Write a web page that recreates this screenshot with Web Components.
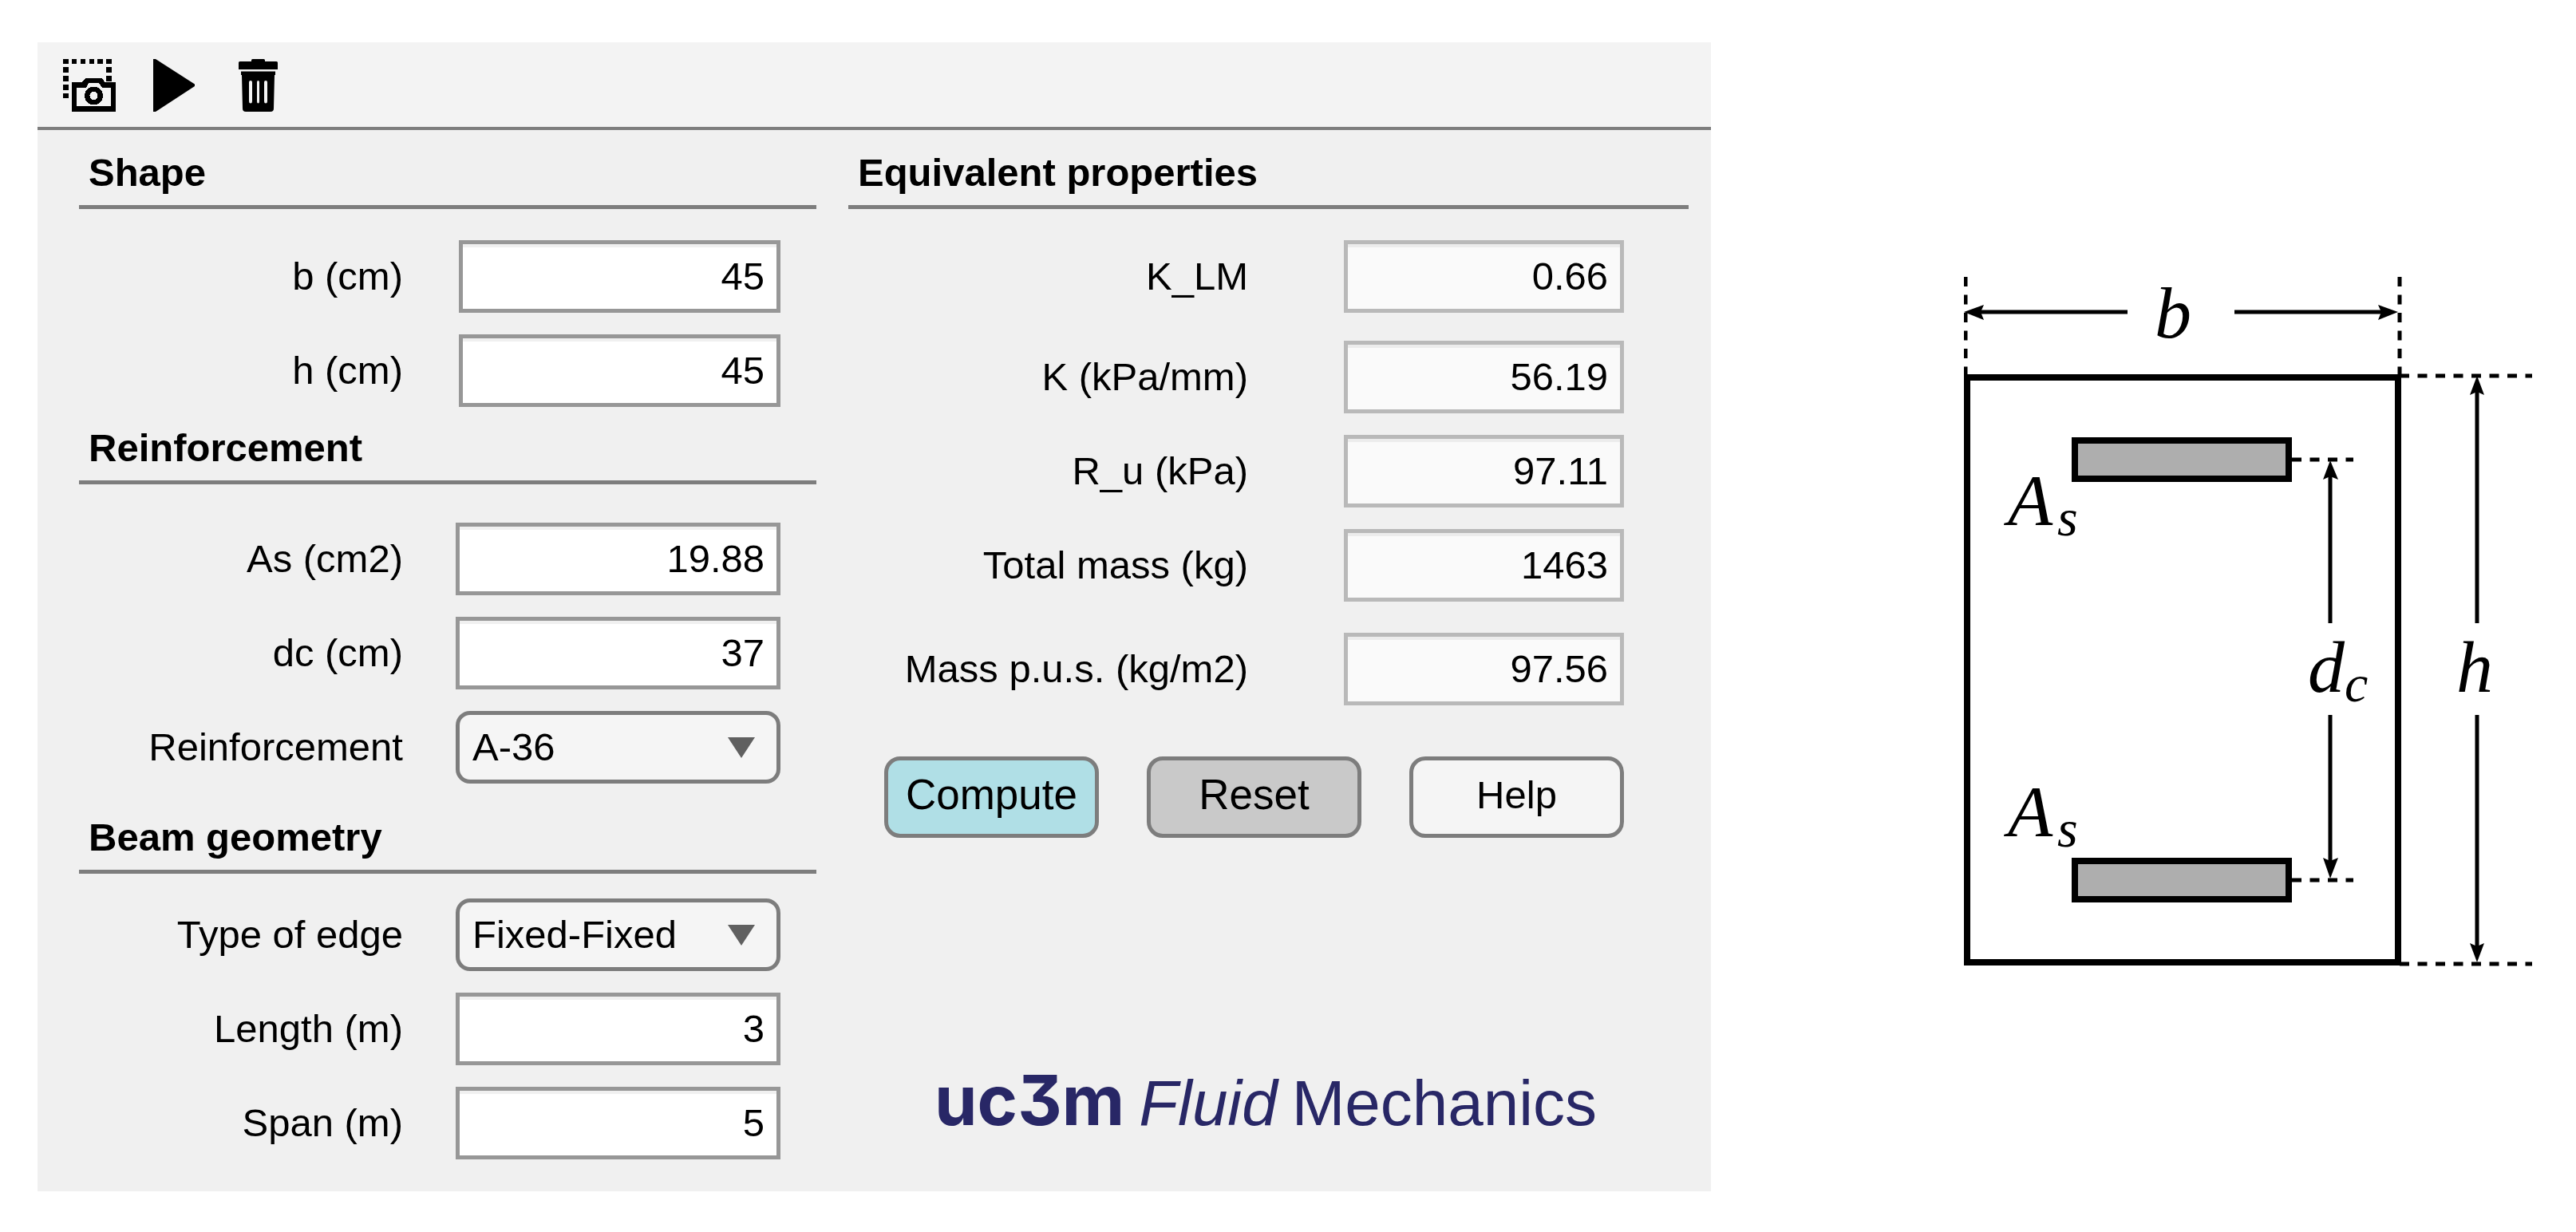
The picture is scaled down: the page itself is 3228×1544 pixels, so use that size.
<!DOCTYPE html>
<html lang="en">
<head>
<meta charset="utf-8">
<title>uc3m Fluid Mechanics - Equivalent properties</title>
<style>
  body {
    margin: 0;
    background: #fff;
    color: #000;
    font-family: "Liberation Sans", Arial, sans-serif;
    font-size: 49px;
    line-height: 56px;
  }
</style>
</head>
<body>
<beam-app></beam-app>

<template id="beam-app">
  <style>
    :host { display: flex; align-items: center; gap: 317px; padding: 53px 55px 51px 47px; }
    main { flex: 1; min-width: 0; background: #f0f0f0; }
    .columns { display: grid; grid-template-columns: 924fr 1053fr; gap: 40px; padding: 25px 28px 40px 52px; }
    .column { display: flex; flex-direction: column; min-width: 0; }
    .shape { --fields-top: 39px; --field-width: 403px; --label-gap: 70px; }
    .steel { --fields-top: 48px; margin-top: 23px; }
    .beam { --fields-top: 31px; margin-top: 39px; }
    .results { --fields-top: 39px; --field-width: 351px; --label-gap: 120px; --fields-right: 81px; }
    .first { margin-bottom: 8px; }
    .last { margin-top: 12px; }
    .actions { display: flex; gap: 60px; padding: 64px 81px 0 45px; }
    .actions push-button { flex: 1; }
    brand-logo { margin: auto 0 25px 108px; }
    section-diagram { flex: 0 0 712px; }
  </style>
  <main>
    <tool-bar></tool-bar>
    <div class="columns">
      <div class="column">
        <form-section class="shape" heading="Shape">
          <edit-field label="b (cm)" value="45"></edit-field>
          <edit-field label="h (cm)" value="45"></edit-field>
        </form-section>
        <form-section class="steel" heading="Reinforcement">
          <edit-field label="As (cm2)" value="19.88"></edit-field>
          <edit-field label="dc (cm)" value="37"></edit-field>
          <choice-field label="Reinforcement" value="A-36"></choice-field>
        </form-section>
        <form-section class="beam" heading="Beam geometry">
          <choice-field label="Type of edge" value="Fixed-Fixed"></choice-field>
          <edit-field label="Length (m)" value="3"></edit-field>
          <edit-field label="Span (m)" value="5"></edit-field>
        </form-section>
      </div>
      <div class="column">
        <form-section class="results" heading="Equivalent properties">
          <edit-field class="first" label="K_LM" value="0.66" readonly></edit-field>
          <edit-field label="K (kPa/mm)" value="56.19" readonly></edit-field>
          <edit-field label="R_u (kPa)" value="97.11" readonly></edit-field>
          <edit-field label="Total mass (kg)" value="1463" readonly></edit-field>
          <edit-field class="last" label="Mass p.u.s. (kg/m2)" value="97.56" readonly></edit-field>
        </form-section>
        <div class="actions">
          <push-button kind="primary">Compute</push-button>
          <push-button kind="secondary">Reset</push-button>
          <push-button>Help</push-button>
        </div>
        <brand-logo></brand-logo>
      </div>
    </div>
  </main>
  <section-diagram></section-diagram>
</template>

<template id="tool-bar">
  <style>
    :host { display: flex; gap: 40px; padding: 21px 32px 19px; background: #f3f3f3; border-bottom: 4px solid #7d7d7d; }
    button { display: block; width: 66px; height: 66px; padding: 0; border: 0; background: none; color: #000; }
    svg { display: block; width: 66px; height: 66px; fill: currentColor; }
  </style>
  <button type="button" aria-label="Capture">
    <svg viewBox="0 0 66 66" shape-rendering="crispEdges">
      <path d="M0 0h7v6H0zM11 0h6v6h-6zM22 0h6v6h-6zM33 0h6v6h-6zM43 0h7v6h-7zM54 0h7v6h-7zM0 10h7v7H0zM0 21h7v7H0zM0 32h7v7H0zM0 43h7v6H0zM54 10h7v7h-7zM54 21h7v7h-7z"/>
      <path fill-rule="evenodd" d="M11 29H24L25 27L28 24H49L51 27L52 29H66V66H11ZM17 36V59H60V36H49L45 30H32L29 36Z"/>
      <path fill-rule="evenodd" d="M38.500 34.500a11.500 11.500 0 1 0 .1 0zM38.500 41a5 5 0 1 1-.1 0z"/>
    </svg>
  </button>
  <button type="button" aria-label="Run">
    <svg viewBox="0 0 66 66"><path d="M7 0H10L59 31.500V34L10 66H7Z"/></svg>
  </button>
  <button type="button" aria-label="Delete">
    <svg viewBox="0 0 66 66">
      <path d="M24 1.500Q24 0 25.500 0H39.500Q41 0 41 1.500V3H55.500Q57 3 57 4.500V13H8V4.500Q8 3 9.500 3H24Z"/>
      <path fill-rule="evenodd" d="M11 15.500H54V20H53L52 62Q52 66 48 66H17Q13 66 13 62L12 20H11ZM21 29V53Q21 55.500 23 55.500T25 53V29Q25 27 23 27T21 29ZM31 29V53Q31 55.500 32.500 55.500T34 53V29Q34 27 32.500 27T31 29ZM40 29V53Q40 55.500 42 55.500T44 53V29Q44 27 42 27T40 29Z"/>
    </svg>
  </button>
</template>

<template id="form-section">
  <style>
    :host { display: block; }
    h2 { margin: 0; padding: 0 12px 13px; border-bottom: 5px solid #7d7d7d; font-size: 49px; line-height: 56px; font-weight: bold; }
    .fields { display: flex; flex-direction: column; gap: 27px; padding: var(--fields-top) var(--fields-right, 45px) 0 0; }
  </style>
  <h2></h2>
  <div class="fields"><slot></slot></div>
</template>

<template id="edit-field">
  <style>
    :host { display: grid; grid-template-columns: 1fr var(--field-width, 407px); column-gap: var(--label-gap, 66px); align-items: center; }
    label { text-align: right; white-space: nowrap; }
    input { box-sizing: border-box; width: 100%; height: 91px; margin: 0; padding: 0 15px 2px; border: 5px solid #979797; border-radius: 0; outline: 0;
      background: #fff; box-shadow: inset 0 4px #f0f0f0; color: #000; font: inherit; text-align: right; }
    label { padding-bottom: 2px; }
    input:read-only { border-color: #b9b9b9; background: #fafafa; box-shadow: inset 0 4px #ececec; }
  </style>
  <label for="control"></label>
  <input id="control" type="text">
</template>

<template id="choice-field">
  <style>
    :host { display: grid; grid-template-columns: 1fr var(--field-width, 407px); column-gap: var(--label-gap, 66px); align-items: center; }
    label { padding-bottom: 2px; text-align: right; white-space: nowrap; }
    .box { display: grid; align-items: center; }
    .box > * { grid-area: 1 / 1; }
    select { appearance: none; box-sizing: border-box; width: 100%; height: 91px; margin: 0; padding: 0 80px 2px 16px; border: 5px solid #7d7d7d;
      border-radius: 18px; outline: 0; background: #f5f5f5; color: #000; font: inherit; }
    svg { justify-self: end; width: 34px; height: 26px; margin-right: 32px; fill: #606060; pointer-events: none; }
  </style>
  <label for="control"></label>
  <div class="box">
    <select id="control"></select>
    <svg viewBox="0 0 34 26" aria-hidden="true"><path d="M0 0H34L17 26Z"/></svg>
  </div>
</template>

<template id="push-button">
  <style>
    :host { display: block; }
    button { box-sizing: border-box; width: 100%; height: 102px; margin: 0; padding: 0 0 6px; border: 5px solid #7d7d7d; border-radius: 20px;
      background: #f5f5f5; color: #000; font: inherit; }
    :host([kind]) button { font-size: 53px; }
    :host([kind="primary"]) button { background: #b0dfe6; }
    :host([kind="secondary"]) button { background: #c9c9c9; }
  </style>
  <button type="button"><slot></slot></button>
</template>

<template id="brand-logo">
  <style>
    :host { display: flex; align-items: baseline; gap: 18px; color: #282766; font-size: 80px; line-height: 90px; white-space: nowrap; }
    .mark { font-family: Inter, "Liberation Sans", sans-serif; font-size: 86px; font-weight: 700; font-feature-settings: "cv09"; }
  </style>
  <span class="mark">uc3m</span>
  <i>Fluid</i>
  <span>Mechanics</span>
</template>

<template id="section-diagram">
  <style>
    :host { display: block; }
    svg { display: block; width: 100%; }
    .line { fill: none; stroke: #000; stroke-width: 5; }
    .dash { fill: none; stroke: #000; stroke-width: 5; stroke-dasharray: 12 10.5; }
    .outline { fill: none; stroke: #000; stroke-width: 8; }
    .bar { fill: #aeaeae; stroke: #000; stroke-width: 8; }
    text { font-family: "Liberation Serif", "Times New Roman", serif; font-style: italic; font-size: 92px; }
    .sub { font-size: 66px; }
  </style>
  <svg viewBox="0 -12 712 876" role="img" aria-label="Beam cross section">
    <rect class="outline" x="4" y="126" width="540" height="733"/>
    <path class="dash" d="M2 0V122M546 0V122"/>
    <path class="dash" d="M546 124H712M546 861H712"/>

    <path class="line" d="M18 44H205M339 44H526"/>
    <path d="M0 44L25 35L21 44L25 54ZM544 44L519 35L523 44L519 54Z"/>
    <text x="239" y="76">b</text>

    <rect class="bar" x="139" y="205" width="268" height="48"/>
    <path class="dash" d="M411 229H488"/>
    <text x="55" y="311">A<tspan class="sub" x="117" y="324">s</tspan></text>

    <rect class="bar" x="139" y="732" width="268" height="48"/>
    <path class="dash" d="M411 756H488"/>
    <text x="55" y="701">A<tspan class="sub" x="117" y="714">s</tspan></text>

    <path class="line" d="M459 246V434M459 549V738"/>
    <path d="M459 230L450 254L459 250L469 254ZM459 754L450 728L459 732L469 728Z"/>
    <text x="431" y="520">d<tspan class="sub" x="477" y="532">c</tspan></text>

    <path class="line" d="M643 140V434M643 549V843"/>
    <path d="M643 124L634 148L643 144L652 148ZM643 859L634 835L643 839L652 835Z"/>
    <text x="617" y="520">h</text>
  </svg>
</template>

<script>
  class Part extends HTMLElement {
    constructor() {
      super();
      const template = document.getElementById(this.localName);
      this.attachShadow({ mode: "open" }).append(template.content.cloneNode(true));
    }
    find(selector) { return this.shadowRoot.querySelector(selector); }
  }

  class FormSection extends Part {
    connectedCallback() { this.find("h2").textContent = this.getAttribute("heading"); }
  }

  class EditField extends Part {
    connectedCallback() {
      const input = this.find("input");
      this.find("label").textContent = this.getAttribute("label");
      input.value = this.getAttribute("value");
      input.readOnly = this.hasAttribute("readonly");
    }
  }

  class ChoiceField extends Part {
    connectedCallback() {
      this.find("label").textContent = this.getAttribute("label");
      this.find("select").replaceChildren(new Option(this.getAttribute("value")));
    }
  }

  customElements.define("tool-bar", class extends Part {});
  customElements.define("form-section", FormSection);
  customElements.define("edit-field", EditField);
  customElements.define("choice-field", ChoiceField);
  customElements.define("push-button", class extends Part {});
  customElements.define("brand-logo", class extends Part {});
  customElements.define("section-diagram", class extends Part {});
  customElements.define("beam-app", class extends Part {});
</script>
</body>
</html>
